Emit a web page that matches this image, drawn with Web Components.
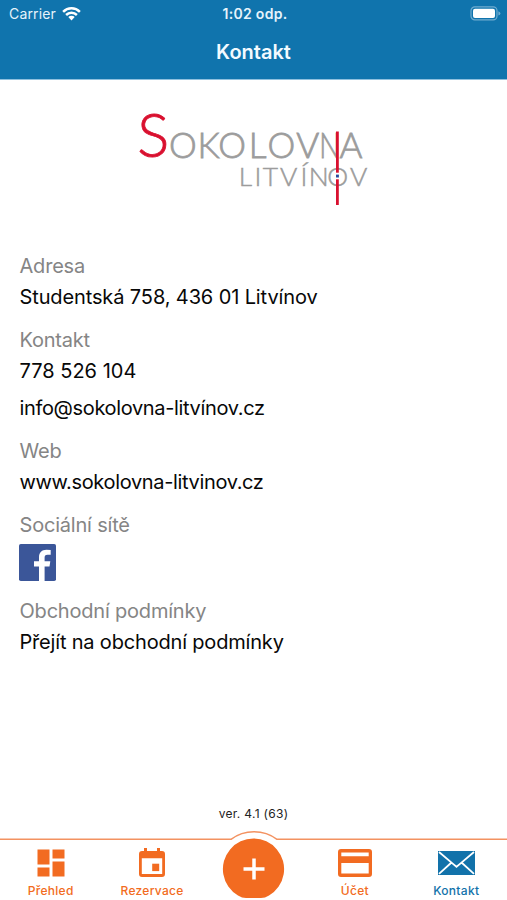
<!DOCTYPE html>
<html lang="cs">
<head>
<meta charset="utf-8">
<title>Kontakt</title>
<style>
html,body{margin:0;height:100%;overflow:hidden;background:#fff}
body{font-family:Inter,"Liberation Sans",sans-serif}
</style>
</head>
<body>
<contact-app></contact-app>
<script>
const define = (name, html) => customElements.define(name, class extends HTMLElement {
  constructor() {
    super();
    const t = document.createElement('template');
    t.innerHTML = html;
    this.attachShadow({mode: 'open'}).append(t.content.cloneNode(true));
  }
});

define('status-bar', `<style>
:host{display:grid;grid-template-columns:1fr auto 1fr;align-items:center;height:27px;padding:0 6px 0 9px;color:#e6f3fb;font-size:14px;line-height:27px}
.l{display:flex;align-items:center;gap:6px;letter-spacing:.15px}
.t{font-weight:600;font-size:14px;letter-spacing:.3px}
.r{justify-self:end}
svg{display:block}
</style>
<div class="l"><span>Carrier</span><svg width="19" height="15" viewBox="0 0 19 15"><g fill="none" stroke="#fff" stroke-width="2.5"><path d="M1.1 5.8a12 12 0 0 1 16.8 0"/><path d="M4.1 9a7.7 7.7 0 0 1 10.8 0"/></g><path d="M6.3 11.1a4.6 4.6 0 0 1 6.4 0L9.5 14.4z" fill="#fff"/></svg></div>
<span class="t">1:02 odp.</span>
<svg class="r" width="31" height="15" viewBox="0 0 31 15"><rect x="1" y=".9" width="26" height="13" rx="3.8" fill="none" stroke="#70acd0" stroke-width="1.2"/><rect x="3" y="2.8" width="22" height="9.2" rx="2" fill="#fff"/><path d="M28.4 5.2q2 .7 2 2.2t-2 2.2z" fill="#70acd0"/></svg>`);

define('nav-title', `<style>
:host{display:block;height:53px;text-align:center;color:#f3faff;font-weight:600;font-size:20px;line-height:51px;border-bottom:1px solid #8fc0de;box-sizing:border-box}
</style><slot></slot>`);

define('club-logo', `<style>
:host{display:block;height:165px}
svg{display:block}
text{font-family:Lato,"Liberation Sans",sans-serif;text-anchor:middle;stroke-width:.8}
.g{fill:#9c9c9c;stroke:#9c9c9c;font-weight:300}
.s{fill:#d9102f;stroke:#d9102f;font-weight:300}
</style>
<svg width="507" height="165" viewBox="0 80 507 165">
<text class="s" font-size="61" transform="translate(153.3 157) scale(.98 1)">S</text>
<text class="g" font-size="35" y="157.5" x="182.9 208.5 232.2 257.5 281.3 307.7">OKOLOV</text>
<text class="g" font-size="35" transform="translate(329.7 157.5) scale(.79 1)">N</text>
<text class="g" font-size="35" y="157.5" x="351">A</text>
<text class="g" font-size="26.4" y="185.7" x="245.5 258 270.5 288.7 304 318.8 337.8 358.7" style="stroke-width:.5">LITVÍNOV</text>
<path d="M337.4 131.5V205" stroke="#d9102f" stroke-width="2.8"/>
<rect x="334.5" y="172.7" width="6" height="6.6" fill="#fff"/><rect x="336" y="174.6" width="2.9" height="2.9" fill="#284ca0"/>
</svg>`);

define('info-block', `<style>
:host{display:block;padding:0 20px 6px 19.5px}
.h{color:#858585;font-size:20px;line-height:31px;height:31px;letter-spacing:-.2px}
</style><div class="h"><slot name="label"></slot></div><slot></slot>`);

define('info-line', `<style>
:host{display:block;color:#080808;font-size:20px;line-height:31px;height:31px;margin-bottom:6px;white-space:nowrap}
:host(:last-child){margin-bottom:0}
</style><slot></slot>`);

define('facebook-mark', `<style>:host{display:block;width:37px;height:37px;margin:3px 0 9px -.5px}svg{display:block}</style>
<svg width="37" height="37" viewBox="0 0 37 37"><rect width="37" height="37" rx="1.8" fill="#3b5699"/><path d="M20 37V22.5h-5v-5.2h5v-4c0-4.8 3-7.5 7.4-7.5q2.6 0 4.3.3v4.7h-3.2c-2.3 0-2.9 1.2-2.9 2.9v3.6h5.7l-.8 5.2h-4.9V37z" fill="#fff"/></svg>`);

define('tab-item', `<style>
:host{display:flex;flex-direction:column;align-items:center;width:101.4px;color:#f26b21;font-size:12px;font-weight:500;line-height:16px}
.i{height:34px;display:flex;align-items:center;margin-bottom:3px}
span{letter-spacing:.3px}
</style><div class="i"><slot name="icon"></slot></div><span><slot></slot></span>`);

define('tab-bar', `<style>
:host{display:block;position:relative;height:70px}
.row{display:flex;position:relative;padding-top:16px;height:54px}
.mid{width:101.4px}
.bg{position:absolute;left:0;top:0}
svg{display:block}
tab-item.on{color:#1272aa}
</style>
<svg class="bg" width="507" height="70" viewBox="0 830 507 70"><path d="M0 839.3H231Q241 831.7 254 831.7T277 839.3H507" fill="none" stroke="#f39261" stroke-width="1.5"/><path d="M238 895.5A30.6 30.6 0 1 1 269 895.5Q265 898 261 898H246Q242 898 238 895.5z" fill="#f26b21"/><path d="M254 858.5v21M243.5 869h21" stroke="#fff" stroke-width="3.5"/></svg>
<div class="row">
<tab-item><svg slot="icon" width="28" height="28" viewBox="0 0 28 28" fill="#f26b21"><path d="M.5.5h12v15h-12zM15.5.5h12v9h-12zM.5 18.5h12v9h-12zM15.5 12.5h12v15h-12z"/></svg>Přehled</tab-item>
<tab-item><svg slot="icon" width="26" height="30" viewBox="0 0 26 30"><path d="M3 3h2V0h3v3h10V0h3v3h2a3 3 0 0 1 3 3v20a3 3 0 0 1-3 3H3a3 3 0 0 1-3-3V6a3 3 0 0 1 3-3zM2.8 10.3v15.8h20.4V10.3z" fill="#f26b21" fill-rule="evenodd"/><path d="M13.2 15.7h7v7.4h-7z" fill="#f26b21"/></svg>Rezervace</tab-item>
<div class="mid"></div>
<tab-item><svg slot="icon" width="34" height="28" viewBox="0 0 34 28"><path d="M3 0h28a3 3 0 0 1 3 3v22a3 3 0 0 1-3 3H3a3 3 0 0 1-3-3V3a3 3 0 0 1 3-3zM3.3 3.4v3.8h27.4V3.4zM3.3 14v10.6h27.4V14z" fill="#f26b21" fill-rule="evenodd"/></svg>Účet</tab-item>
<tab-item class="on"><svg slot="icon" width="37" height="24" viewBox="0 0 37 24"><path d="M0 0h37v24H0z" fill="#1272aa"/><path d="M1 1l14.6 12.4 2.9 2.4 2.9-2.4L36 1M1 22.8L13.5 11.5M36 22.8L23.5 11.5" fill="none" stroke="#fff" stroke-width="1.8"/></svg>Kontakt</tab-item>
</div>`);

define('contact-app', `<style>
:host{display:flex;flex-direction:column;width:507px;height:900px;background:#fff}
header{background:#1074ad;height:80px}
main{flex:1;display:flex;flex-direction:column;padding-top:6px}
.next{padding-top:6px}
.address{letter-spacing:-.12px}
.mail,.web{letter-spacing:-.35px}
.terms{letter-spacing:-.18px}
footer{margin-top:auto;text-align:center;color:#222;font-size:12px;line-height:16px;letter-spacing:.3px;padding-bottom:8px}
</style>
<header><status-bar></status-bar><nav-title>Kontakt</nav-title></header>
<club-logo></club-logo>
<main>
<info-block><span slot="label">Adresa</span><info-line class="address">Studentská 758, 436 01 Litvínov</info-line></info-block>
<info-block class="next"><span slot="label">Kontakt</span><info-line>778 526 104</info-line><info-line class="mail">info@sokolovna-litvínov.cz</info-line></info-block>
<info-block class="next"><span slot="label">Web</span><info-line class="web">www.sokolovna-litvinov.cz</info-line></info-block>
<info-block class="next"><span slot="label">Sociální sítě</span><facebook-mark></facebook-mark></info-block>
<info-block><span slot="label">Obchodní podmínky</span><info-line class="terms">Přejít na obchodní podmínky</info-line></info-block>
<footer>ver. 4.1 (63)</footer>
</main>
<tab-bar></tab-bar>`);
</script>
</body>
</html>
